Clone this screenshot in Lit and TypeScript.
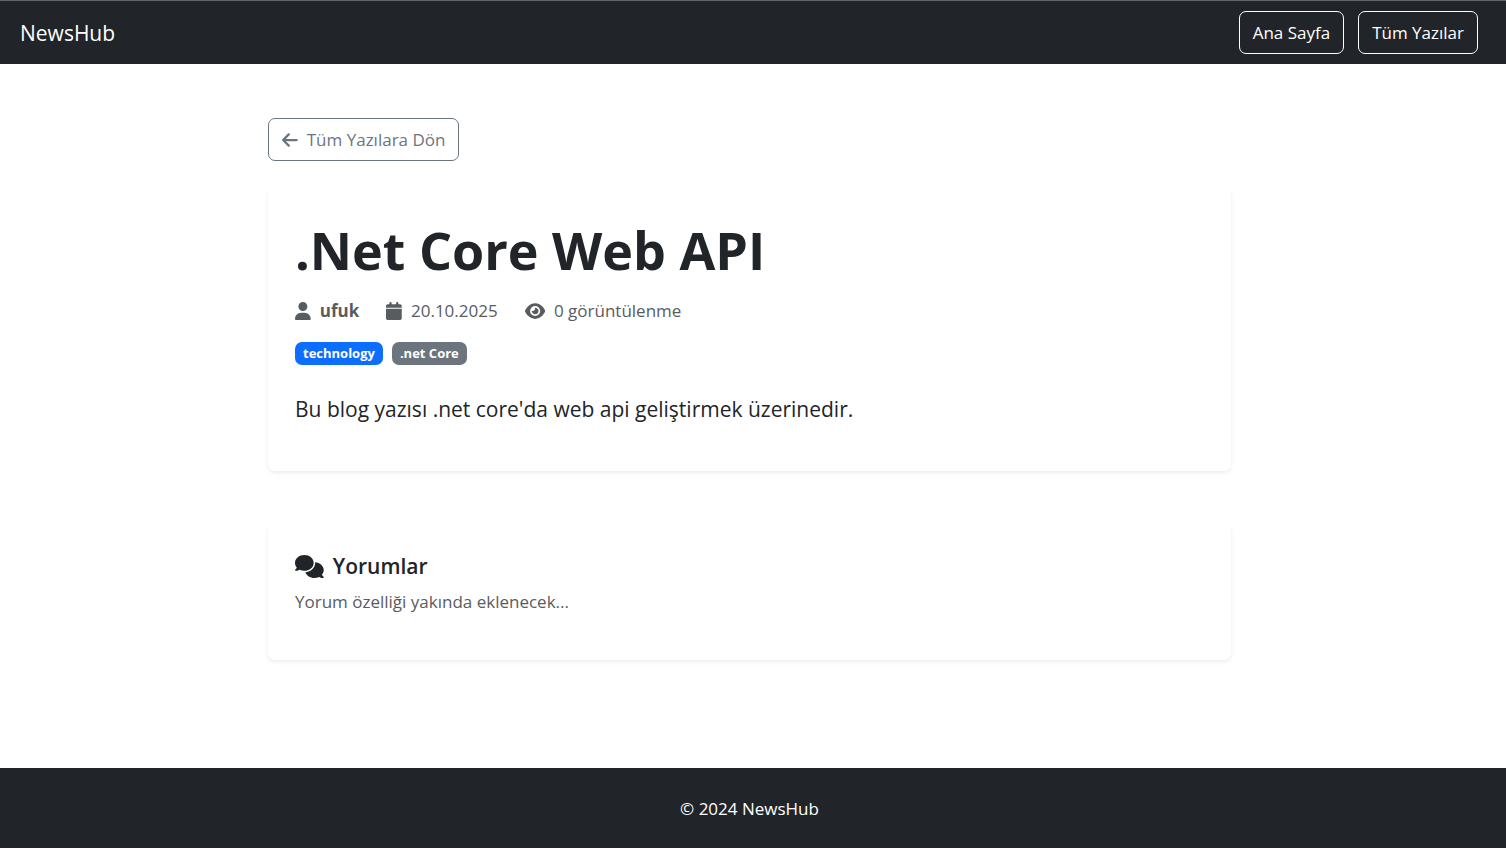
import { LitElement, html, css, svg } from "lit";
import { customElement } from "lit/decorators.js";

const icon = (name: string, width: number, path: string) => html`
  <svg class="icon ${name}" viewBox="0 0 ${width} 512" aria-hidden="true">${svg`<path d=${path}></path>`}</svg>
`;

const ARROW_LEFT =
  "M9.4 233.4c-12.5 12.5-12.5 32.8 0 45.3l160 160c12.5 12.5 32.8 12.5 45.3 0s12.5-32.8 0-45.3L109.2 288 416 288c17.7 0 32-14.3 32-32s-14.3-32-32-32l-306.7 0L214.6 118.6c12.5-12.5 12.5-32.8 0-45.3s-32.8-12.5-45.3 0l-160 160z";
const USER =
  "M224 256A128 128 0 1 0 224 0a128 128 0 1 0 0 256zm-45.7 48C79.8 304 0 383.8 0 482.3C0 498.7 13.3 512 29.7 512l388.6 0c16.4 0 29.7-13.3 29.7-29.7C448 383.8 368.2 304 269.7 304l-91.4 0z";
const CALENDAR =
  "M96 32l0 32L48 64C21.5 64 0 85.5 0 112l0 48 448 0 0-48c0-26.5-21.5-48-48-48l-48 0 0-32c0-17.7-14.3-32-32-32s-32 14.3-32 32l0 32L160 64l0-32c0-17.7-14.3-32-32-32S96 14.3 96 32zM448 192L0 192 0 464c0 26.5 21.5 48 48 48l352 0c26.5 0 48-21.5 48-48l0-272z";
const EYE =
  "M288 32c-80.8 0-145.5 36.8-192.6 80.6C48.6 156 17.3 208 2.5 243.7c-3.3 7.9-3.3 16.7 0 24.6C17.3 304 48.6 356 95.4 399.4C142.5 443.2 207.2 480 288 480s145.5-36.8 192.6-80.6c46.8-43.5 78.1-95.4 93-131.1c3.3-7.9 3.3-16.7 0-24.6c-14.9-35.7-46.2-87.7-93-131.1C433.5 68.8 368.8 32 288 32zM144 256a144 144 0 1 1 288 0 144 144 0 1 1 -288 0zm144-64c0 35.3-28.7 64-64 64c-7.1 0-13.9-1.2-20.3-3.3c-5.5-1.8-11.9 1.6-11.7 7.4c.3 6.9 1.3 13.8 3.2 20.7c13.7 51.2 66.4 81.6 117.6 67.9s81.6-66.4 67.9-117.6c-11.1-41.5-47.8-69.4-88.6-71.1c-5.8-.2-9.2 6.1-7.4 11.7c2.1 6.4 3.3 13.2 3.3 20.3z";
const COMMENTS =
  "M208 352c114.9 0 208-78.8 208-176S322.9 0 208 0S0 78.8 0 176c0 38.6 14.7 74.3 39.6 103.4c-3.5 9.4-8.7 17.7-14.2 24.7c-4.8 6.2-9.7 11-13.3 14.3c-1.8 1.6-3.3 2.9-4.3 3.7c-.5 .4-.9 .7-1.1 .8l-.2 .2C1 327.2-1.4 334.4 .8 340.9S9.1 352 16 352c21.8 0 43.8-5.6 62.1-12.5c9.2-3.5 17.8-7.4 25.2-11.4C134.1 343.3 169.8 352 208 352zM448 176c0 112.3-99.1 196.9-216.5 207C255.8 457.4 336.4 512 432 512c38.2 0 73.9-8.7 104.7-23.9c7.5 4 16 7.9 25.2 11.4c18.3 6.9 40.3 12.5 62.1 12.5c6.9 0 13.1-4.5 15.2-11.1c2.1-6.6-.2-13.8-5.8-17.9l-.2-.2c-.2-.2-.6-.4-1.1-.8c-1-.8-2.5-2-4.3-3.7c-3.6-3.3-8.5-8.1-13.3-14.3c-5.5-7-10.7-15.4-14.2-24.7c24.9-29 39.6-64.7 39.6-103.4c0-92.8-84.9-168.9-192.6-175.5c.4 5.1 .6 10.3 .6 15.5z";

@customElement("app-root")
export class AppRoot extends LitElement {
  static styles = css`
    :host {
      display: flex;
      flex-direction: column;
      box-sizing: border-box;
      min-height: 100vh;
      border-bottom: 1px solid #fff;
      background: #fff;
      color: #212529;
      font-family: "Segoe UI", "Open Sans", "Noto Sans", sans-serif;
      font-size: 17px;
      line-height: 26px;
    }
    * {
      box-sizing: border-box;
    }
    a {
      color: inherit;
      text-decoration: none;
    }
    h1,
    h2,
    p {
      margin: 0;
    }
    .icon {
      display: block;
      flex: none;
      height: 18px;
      fill: currentColor;
    }
    .navbar {
      display: flex;
      align-items: center;
      justify-content: space-between;
      padding: 10px 28px 10px 20px;
      border-top: 1px solid #666;
      background: #212529;
      color: #fff;
    }
    .brand {
      font-size: 21px;
    }
    .links {
      display: flex;
      gap: 14px;
    }
    .btn {
      display: inline-flex;
      align-items: center;
      gap: 9px;
      padding: 8px 13px 7px;
      border: 1px solid currentColor;
      border-radius: 7px;
      white-space: nowrap;
    }
    .btn.secondary {
      color: #6c757d;
    }
    main {
      flex: 1;
      display: flex;
      flex-direction: column;
      align-items: flex-start;
      width: 100%;
      max-width: 970px;
      margin: 0 auto;
      padding: 54px 7px 108px 0;
    }
    .card {
      width: 100%;
      padding: 26px 27px 45px;
      border-radius: 7px;
      background: #fff;
      box-shadow: 0 2px 4px rgba(0, 0, 0, 0.075);
    }
    .post {
      margin: 27px 0 53px;
    }
    .title {
      font-size: 52px;
      font-weight: 700;
      line-height: 72px;
    }
    .meta {
      display: flex;
      flex-wrap: wrap;
      gap: 27px;
      margin-top: 12px;
      color: #595c5f;
    }
    .meta span,
    .meta strong {
      display: flex;
      align-items: center;
      gap: 9px;
    }
    .tags {
      display: flex;
      gap: 9px;
      margin-top: 18px;
    }
    .tag {
      padding: 0 8px;
      border-radius: 7px;
      background: #0d6efd;
      color: #fff;
      font-size: 13px;
      font-weight: 700;
      line-height: 23px;
    }
    .tag.gray {
      background: #6c757d;
    }
    .lead {
      margin-top: 27px;
      font-size: 21px;
      line-height: 34px;
    }
    .heading {
      display: flex;
      align-items: center;
      gap: 9px;
      font-size: 21px;
      font-weight: 600;
      line-height: 32px;
    }
    .comments {
      height: 23px;
    }
    .note {
      margin-top: 7px;
      color: #595c5f;
    }
    footer {
      padding: 28px 7px 26px 0;
      background: #212529;
      color: #fff;
      text-align: center;
    }
  `;

  render() {
    return html`
      <nav class="navbar">
        <a class="brand" href="#">NewsHub</a>
        <div class="links">
          <a class="btn" href="#">Ana Sayfa</a>
          <a class="btn" href="#">Tüm Yazılar</a>
        </div>
      </nav>
      <main>
        <a class="btn secondary" href="#">${icon("arrow", 448, ARROW_LEFT)}Tüm Yazılara Dön</a>
        <article class="card post">
          <h1 class="title">.Net Core Web API</h1>
          <div class="meta">
            <strong>${icon("user", 448, USER)}ufuk</strong>
            <span>${icon("calendar", 448, CALENDAR)}20.10.2025</span>
            <span>${icon("eye", 576, EYE)}0 görüntülenme</span>
          </div>
          <div class="tags">
            <span class="tag">technology</span>
            <span class="tag gray">.net Core</span>
          </div>
          <p class="lead">Bu blog yazısı .net core'da web api geliştirmek üzerinedir.</p>
        </article>
        <section class="card">
          <h2 class="heading">${icon("comments", 640, COMMENTS)}Yorumlar</h2>
          <p class="note">Yorum özelliği yakında eklenecek...</p>
        </section>
      </main>
      <footer>© 2024 NewsHub</footer>
    `;
  }
}
